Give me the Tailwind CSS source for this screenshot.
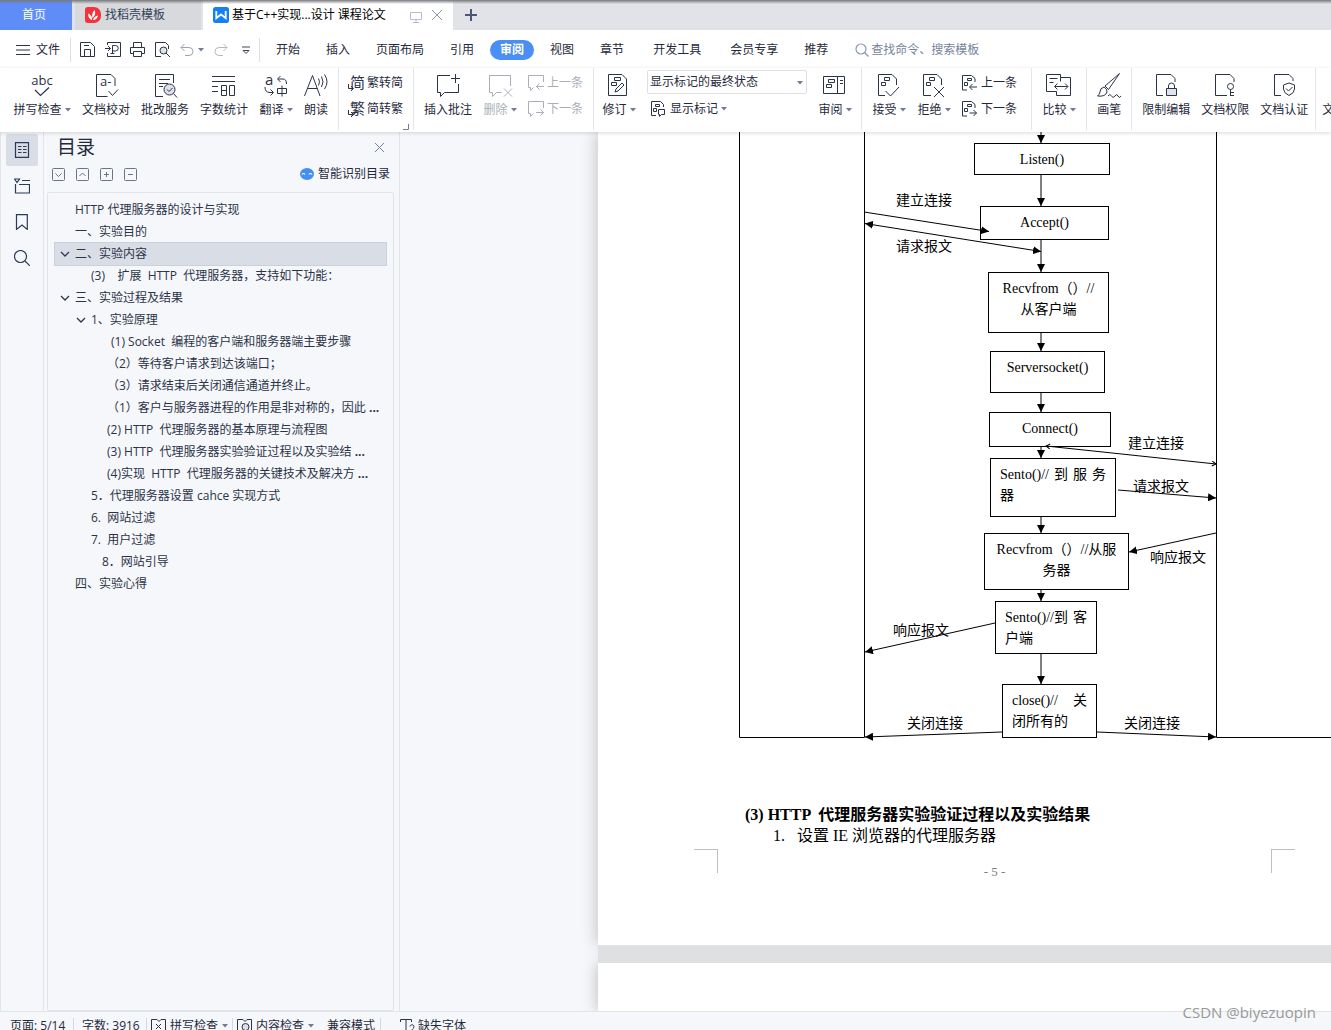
<!DOCTYPE html>
<html lang="zh-CN">
<head>
<meta charset="utf-8">
<title>基于C++实现 课程论文</title>
<script src="https://cdn.jsdelivr.net/npm/@tailwindcss/browser@4"></script>
</head>
<body class="flex h-screen flex-col overflow-hidden bg-[#f5f7fa] font-['Open_Sans','Noto_Sans_CJK_SC',sans-serif] text-xs text-[#1f2a3c]">

<svg class="absolute size-0" aria-hidden="true">
  <defs>
    <symbol id="caret" viewBox="0 0 6 4"><path d="M0 0h6L3 3.6z" fill="#6f7c94"/></symbol>
    <symbol id="chev" viewBox="0 0 10 6"><path d="M1 1l4 4 4-4" fill="none" stroke="#2b3650" stroke-width="1.3"/></symbol>
    <marker id="arr" viewBox="0 0 8 8" refX="8" refY="4" markerWidth="8" markerHeight="8" markerUnits="userSpaceOnUse" orient="auto-start-reverse"><path d="M0 0l8 4-8 4z" fill="#000" stroke="none"/></marker>
    <marker id="arr-open" viewBox="0 0 6 6" refX="5" refY="3" markerWidth="6" markerHeight="6" markerUnits="userSpaceOnUse" orient="auto-start-reverse"><path d="M1 .5L5 3 1 5.500" fill="none" stroke="#000"/></marker>
  </defs>
</svg>

<!-- Window tabs -->
<header class="relative flex h-[30px] shrink-0 items-stretch bg-[#e1e3e8] text-[#333f57]">
  <button class="w-18 bg-[#5f8df8] pr-1 text-white">首页</button>
  <button class="ml-[3px] flex w-[126px] items-center gap-1 bg-[#d7d9dd] pl-[10px]">
    <svg class="size-4" viewBox="0 0 16 16"><path d="M3 0h6a7 7 0 0 1 7 7v2a7 7 0 0 1-7 7H3a3 3 0 0 1-3-3V3a3 3 0 0 1 3-3z" fill="#f5323c"/><path d="M7 13C4 12 3 9.500 3.200 6.500 5.500 7.500 6.500 9 7 11zM7.500 11C6.500 8 7.500 5 9.500 3c1.500 3 .5 6-2 8zM8 13c.5-2.500 2.500-4 5-4.500C12.500 11 11 13 8 13z" fill="#fff"/></svg>
    <span>找稻壳模板</span>
  </button>
  <div class="ml-[2px] flex w-[250px] items-center bg-white pl-[10px]">
    <svg class="size-4" viewBox="0 0 16 16"><rect width="16" height="16" rx="2.500" fill="#1380f5"/><path d="M3.300 4v7.200L8 7.500l4.700 3.700V4" fill="none" stroke="#fff" stroke-width="1.800"/></svg>
    <span class="ml-[3px] text-black">基于C++实现...设计 课程论文</span>
    <svg class="mt-1 ml-auto size-3" viewBox="0 0 12 12" fill="none" stroke="#b4bdd0"><path d="M.5 1.500h11v7H.5zM6 8.500v3M3 11.500h6"/></svg>
    <button aria-label="关闭标签" class="mr-[10px] ml-[9px]"><svg class="size-3" viewBox="0 0 12 12" stroke="#8c9ab5"><path d="M1 1l10 10M11 1L1 11"/></svg></button>
  </div>
  <button aria-label="新建标签" class="ml-3 pb-px"><svg class="size-3" viewBox="0 0 12 12" stroke="#4a5876" stroke-width="2"><path d="M6 0v12M0 6h12"/></svg></button>
  <div class="pointer-events-none absolute inset-x-0 top-0 h-1 bg-gradient-to-b from-[#77797d] to-transparent"></div>
</header>

<!-- Menu row -->
<nav class="flex h-[38px] shrink-0 items-center bg-white pt-px">
  <button class="flex items-center gap-[6px] pr-[10px] pl-4">
    <svg class="h-3 w-[14px]" viewBox="0 0 14 12" stroke="#2b3347"><path d="M0 1.500h14M0 6h14M0 10.500h14"/></svg>文件
  </button>
  <div class="flex h-6 items-center border-l border-[#dcdfe5] pl-[9px]">
    <button aria-label="保存"><svg class="size-4" viewBox="0 0 16 16" fill="none" stroke="#2b3347"><path d="M.5 14.500V.5h10l4 4v10zM4.500 14V7.500h6V14M4 3.500h5"/></svg></button>
    <button aria-label="输出为PDF" class="ml-[9px]"><svg class="size-4" viewBox="0 0 16 16" fill="none" stroke="#2b3347"><path d="M2.500 3V.5h13v14h-13V11M0 6.500h5M3 4l2.500 2.500L3 9M7.500 12V3.500h3a2.500 2.500 0 0 1 0 5.500h-3M5.500 11.500h4"/></svg></button>
    <button aria-label="打印" class="ml-[9px]"><svg class="size-4" viewBox="0 0 16 16" fill="none" stroke="#2b3347"><path d="M3.500 5V.5h8V5M3.500 11.500h-3V5.500h14v6h-3M3.500 9.500h8v5h-8z"/></svg></button>
    <button aria-label="打印预览" class="ml-[9px]"><svg class="size-4" viewBox="0 0 16 16" fill="none" stroke="#2b3347"><path d="M6 14.500H.5V.5h10l3 3V7M11 11l4 4"/><circle cx="8.500" cy="8.500" r="3.500" fill="#dfe3ea"/></svg></button>
    <button aria-label="撤销" class="ml-[9px] flex items-center gap-1"><svg class="h-4 w-[14px]" viewBox="0 0 14 16" fill="none" stroke="#9aa3b2"><path d="M4.500 2L1 5.500 4.500 9M1 5.500h8a4 4 0 0 1 0 8H5"/></svg><svg class="h-1 w-[6px]"><use href="#caret"/></svg></button>
    <button aria-label="恢复" class="ml-[10px]"><svg class="h-4 w-[14px]" viewBox="0 0 14 16" fill="none" stroke="#b3b9c4"><path d="M9.500 2L13 5.500 9.500 9M13 5.500H5a4 4 0 0 0 0 8h4"/></svg></button>
    <button aria-label="自定义快速访问" class="ml-[14px] pr-[9px]"><svg class="size-2" viewBox="0 0 8 8" fill="none" stroke="#3d475c"><path d="M0 1h8M1 4.500h6L4 7.500z"/></svg></button>
  </div>
  <div class="flex h-6 items-center border-l border-[#dcdfe5] pl-[3px] whitespace-nowrap">
    <button class="px-[13px]">开始</button>
    <button class="px-[13px]">插入</button>
    <button class="px-[13px]">页面布局</button>
    <button class="px-[13px]">引用</button>
    <button class="mx-[3px] h-5 rounded-full bg-[#4a8ff5] px-[10px] leading-5 font-bold text-white">审阅</button>
    <button class="px-[13px]">视图</button>
    <button class="px-[13px]">章节</button>
    <button class="px-4">开发工具</button>
    <button class="px-[13px]">会员专享</button>
    <button class="px-[13px]">推荐</button>
  </div>
  <label class="ml-[14px] flex items-center gap-[2px]">
    <svg class="size-[14px]" viewBox="0 0 14 14" fill="none" stroke="#8a99b3" stroke-width="1.200"><circle cx="6" cy="6" r="5"/><path d="M9.500 9.500l4 4"/></svg>
    <input aria-label="查找命令" placeholder="查找命令、搜索模板" class="w-40 outline-none placeholder:text-[#76849d]">
  </label>
</nav>

<!-- Review ribbon -->
<section class="z-10 flex h-16 shrink-0 overflow-hidden bg-white pb-[2px] leading-4 whitespace-nowrap shadow-[0_1px_4px_rgba(0,0,0,0.15)]">
  <div class="flex shrink-0 gap-[11px] pt-[6px] pr-[10px] pl-[13px]">
    <button class="flex w-[58px] flex-col items-center gap-1">
      <svg class="size-6 overflow-visible" viewBox="0 0 24 24"><text x="12" y="11" text-anchor="middle" font-size="13" fill="#2b3347">abc</text><path d="M5 16l5.500 5.500L19 13.500" fill="none" stroke="#2b3347" stroke-width="1.200"/></svg>
      <span class="flex items-center gap-[3px]">拼写检查<svg class="h-1 w-[6px]"><use href="#caret"/></svg></span>
    </button>
    <button class="flex flex-col items-center gap-1">
      <svg class="size-6 overflow-visible" viewBox="0 0 24 24" fill="none" stroke="#2b3347"><path d="M13.500 22.500h-11V.5H17l4 4V12M14.500 17l4 4.500 5.500-6"/><text x="6" y="12" font-size="13" fill="#2b3347" stroke="none">a-</text></svg>文档校对
    </button>
    <button class="flex flex-col items-center gap-1">
      <svg class="size-6 overflow-visible" viewBox="0 0 24 24" fill="none" stroke="#2b3347"><path d="M10 22.500H2.500V.5h18V9M6 5.500h11M6 9.500h9M6 12.500h4"/><circle cx="16.500" cy="15.500" r="5.500" fill="#dde1e8"/><path d="M14 15.500l2 2 3.500-3.500M20.500 19.500l3.500 4"/></svg>批改服务
    </button>
    <button class="flex flex-col items-center gap-1">
      <svg class="size-6 overflow-visible" viewBox="0 0 24 24" fill="none" stroke="#2b3347"><path d="M0 2.500h23M0 7.500h23M0 12.500h6M0 17.500h6M9.500 11.500h5v10h-5zM9.500 16.500h5M17.500 11.500h5v10h-5z"/></svg>字数统计
    </button>
    <button class="flex w-[34px] flex-col items-center gap-1">
      <svg class="size-6 overflow-visible" viewBox="0 0 24 24" fill="none" stroke="#2b3347"><text x="1" y="11" font-size="15" fill="#2b3347" stroke="none">a</text><path d="M16.500 2L13.500 5l3 3M14 5h5q3.500 0 3.500 5M1 13q0 5.500 5 5.500h3M6.500 15.500l3 3-3 3M13.500 14.500h9v5h-9zM18 11.500v11"/></svg>
      <span class="flex items-center gap-[3px]">翻译<svg class="h-1 w-[6px]"><use href="#caret"/></svg></span>
    </button>
    <button class="flex flex-col items-center gap-1">
      <svg class="size-6 overflow-visible" viewBox="0 0 24 24" fill="none" stroke="#2b3347"><path d="M.5 22L8.500 1.500 16 22M3.500 14.500h10M14.500 4.500q2 3 0 7M17.500 2.500q3 5.500 0 10.500M20.500 .5q5 7.500 0 14.500"/></svg>朗读
    </button>
  </div>

  <div class="relative flex shrink-0 flex-col gap-[10px] border-l border-[#e3e6eb] px-[10px] pt-[7px]">
    <button class="flex items-center gap-[2px]">
      <svg class="size-4 overflow-visible" viewBox="0 0 16 16" fill="none" stroke="#2b3347"><text x="1" y="13" font-size="15" fill="#2b3347" stroke="none">简</text><path d="M-.5 9v4.500H4M2 11l2.500 2.500L2 16"/></svg>繁转简
    </button>
    <button class="flex items-center gap-[2px]">
      <svg class="size-4 overflow-visible" viewBox="0 0 16 16" fill="none" stroke="#2b3347"><text x="1" y="13" font-size="15" fill="#2b3347" stroke="none">繁</text><path d="M-.5 9v4.500H4M2 11l2.500 2.500L2 16"/></svg>简转繁
    </button>
    <svg class="absolute right-1 bottom-0 size-[6px]" viewBox="0 0 6 6"><path d="M5.500 0v5.500H0" fill="none" stroke="#6f7c94"/></svg>
  </div>

  <div class="flex shrink-0 gap-[11px] border-l border-[#e3e6eb] px-[10px] pt-[6px]">
    <button class="flex flex-col items-center gap-1">
      <svg class="size-6 overflow-visible" viewBox="0 0 24 24" fill="none" stroke="#2b3347"><path d="M14 1.500H1.500v17h3v4l4-4h14V10M19.500 0v9M15 4.500h9"/></svg>插入批注
    </button>
    <button disabled class="flex w-[34px] flex-col items-center gap-1 text-[#a9aeb8]">
      <svg class="size-6 overflow-visible" viewBox="0 0 24 24" fill="none" stroke="#a9aeb8"><path d="M22.500 12V1.500H1.500v17h3v4l4-4h5M16 14.500l8 8M24 14.500l-8 8"/></svg>
      <span class="flex items-center gap-[3px]">删除<svg class="h-1 w-[6px]"><use href="#caret"/></svg></span>
    </button>
    <div class="flex flex-col gap-[10px] pt-px text-[#a9aeb8]">
      <button disabled class="flex items-center gap-[2px]"><svg class="size-4 overflow-visible" viewBox="0 0 16 16" fill="none" stroke="#a9aeb8"><path d="M15.500 7V.5H.5v12h2v3l3-3M16 11.500H8.500M11.500 8.500l-3 3 3 3"/></svg><span class="pl-px">上一条</span></button>
      <button disabled class="flex items-center gap-[2px]"><svg class="size-4 overflow-visible" viewBox="0 0 16 16" fill="none" stroke="#a9aeb8"><path d="M15.500 7V.5H.5v12h2v3l3-3M8 11.500h7.500M12.500 8.500l3 3-3 3"/></svg><span class="pl-px">下一条</span></button>
    </div>
  </div>

  <div class="flex shrink-0 gap-[11px] border-l border-[#e3e6eb] pt-[6px] pr-[9px] pl-2">
    <button class="flex w-[34px] flex-col items-center gap-1">
      <svg class="size-6 overflow-visible" viewBox="0 0 24 24" fill="none" stroke="#2b3347"><path d="M1.500 .5H15l4.500 4.500v16.500h-18zM7.500 3.500h6v3h-6zM4.500 8.500h5v3h-5zM8 18l1-3 6-6 2 2-6 6z"/></svg>
      <span class="flex items-center gap-[3px]">修订<svg class="h-1 w-[6px]"><use href="#caret"/></svg></span>
    </button>
    <div class="-mt-1 flex flex-col items-start gap-[7px]">
      <div class="relative">
        <select aria-label="标记显示状态" class="h-6 w-40 appearance-none rounded-xs border border-[#dcdfe5] bg-white pl-[2px]"><option>显示标记的最终状态</option></select>
        <svg class="pointer-events-none absolute top-[11px] right-1 h-1 w-[6px]"><use href="#caret"/></svg>
      </div>
      <button class="flex items-center gap-[3px] pl-1">
        <svg class="size-4 overflow-visible" viewBox="0 0 16 16" fill="none" stroke="#2b3347"><path d="M5 14.500H.5V.5h9l3 3V6M4.500 3.500h4v2h-4zM2.500 7.500h3v3h-3zM7.500 8.500h6v5h-3l-2 2v-2h-1z"/></svg>显示标记<svg class="h-1 w-[6px]"><use href="#caret"/></svg>
      </button>
    </div>
    <button class="flex w-[34px] flex-col items-center gap-1">
      <svg class="size-6 overflow-visible" viewBox="0 0 24 24" fill="none" stroke="#2b3347"><path d="M.5 2.500h21v17H.5zM14.500 2.500v17M5.500 5.500h6v3h-6zM3.500 10.500h5v3h-5zM17 6.500h3M17 9.500h3"/></svg>
      <span class="flex items-center gap-[3px]">审阅<svg class="h-1 w-[6px]"><use href="#caret"/></svg></span>
    </button>
  </div>

  <div class="flex shrink-0 gap-[11px] border-l border-[#e3e6eb] pt-[6px] pr-[14px] pl-[10px]">
    <button class="flex w-[34px] flex-col items-center gap-1">
      <svg class="size-6 overflow-visible" viewBox="0 0 24 24" fill="none" stroke="#2b3347"><path d="M8 21.500H1.500V.5H15l4.500 4.500v6M7.500 3.500h5v3h-5zM4.500 8.500h4v3h-4zM8.500 17l5 5 8.500-9"/></svg>
      <span class="flex items-center gap-[3px]">接受<svg class="h-1 w-[6px]"><use href="#caret"/></svg></span>
    </button>
    <button class="flex w-[34px] flex-col items-center gap-1">
      <svg class="size-6 overflow-visible" viewBox="0 0 24 24" fill="none" stroke="#2b3347"><path d="M9 21.500H1.500V.5H15l4.500 4.500v6M7.500 3.500h5v3h-5zM4.500 8.500h4v3h-4zM12 13l10 10M22 13L12 23"/></svg>
      <span class="flex items-center gap-[3px]">拒绝<svg class="h-1 w-[6px]"><use href="#caret"/></svg></span>
    </button>
    <div class="flex flex-col gap-[10px] pt-px">
      <button class="flex items-center gap-[2px]"><svg class="size-4 overflow-visible" viewBox="0 0 16 16" fill="none" stroke="#2b3347"><path d="M5 15H.5V.5h9l3.500 3V7M5.500 3.500h4v2h-4zM2.500 7.500h3v3h-3zM15 12H8M10.500 9l-3 3 3 3"/></svg><span class="pl-px">上一条</span></button>
      <button class="flex items-center gap-[2px]"><svg class="size-4 overflow-visible" viewBox="0 0 16 16" fill="none" stroke="#2b3347"><path d="M5 15H.5V.5h9l3.500 3V7M5.500 3.500h4v2h-4zM2.500 7.500h3v3h-3zM7.500 12h7M11.500 9l3 3-3 3"/></svg><span class="pl-px">下一条</span></button>
    </div>
  </div>

  <div class="flex shrink-0 border-l border-[#e3e6eb] px-[10px] pt-[6px]">
    <button class="flex w-[34px] flex-col items-center gap-1">
      <svg class="size-6 overflow-visible" viewBox="0 0 24 24" fill="none" stroke="#2b3347"><path d="M9.500 17.500H-.5V.5h14v3M2.500 4.500h8M2.500 8.500h4M13.500 3.500h10v18h-14v-4M13.500 3.500v4M8 12.500h12.500M10.500 9.500l-3 3 3 3M18 9.500l3 3-3 3"/></svg>
      <span class="flex items-center gap-[3px]">比较<svg class="h-1 w-[6px]"><use href="#caret"/></svg></span>
    </button>
  </div>

  <div class="flex shrink-0 border-l border-[#e3e6eb] px-[10px] pt-[6px]">
    <button class="flex flex-col items-center gap-1">
      <svg class="size-6 overflow-visible" viewBox="0 0 24 24" fill="none" stroke="#2b3347"><path d="M22.500-.5L8 12l3.500 3.500zM7 13q-4 1-4 5-1 3-2.500 4 8 1 9.500-4 .5-3-3-5zM11 22q2-3 3.500 0t3.500 0 3 0 3 0"/></svg>画笔
    </button>
  </div>

  <div class="flex shrink-0 gap-[11px] border-l border-[#e3e6eb] pt-[6px] pr-[7px] pl-[10px]">
    <button class="flex flex-col items-center gap-1">
      <svg class="size-6 overflow-visible" viewBox="0 0 24 24" fill="none" stroke="#2b3347"><path d="M9 21.500H2.500V.5H17l4 4V8M14.500 14v-2a3 3 0 0 1 6 0v2"/><path d="M12.500 14.500h10v7h-10z" fill="#dfe3ea"/></svg>限制编辑
    </button>
    <button class="flex flex-col items-center gap-1">
      <svg class="size-6 overflow-visible" viewBox="0 0 24 24" fill="none" stroke="#2b3347"><path d="M14 21.500H2.500V.5H17l4 4V8M17.500 15.500V22M17.500 18.500h3.500M17.500 21.500h3.500"/><circle cx="17.500" cy="12.500" r="3"/></svg>文档权限
    </button>
    <button class="flex flex-col items-center gap-1">
      <svg class="size-6 overflow-visible" viewBox="0 0 24 24" fill="none" stroke="#2b3347"><path d="M9 21.500H2.500V.5H17l4 4V7M17 9l5.500 2v4q0 4-5.500 6.500-5.500-2.500-5.500-6.500v-4zM14 14.500l2.500 2.500 4-4"/></svg>文档认证
    </button>
  </div>
  <div class="flex shrink-0 border-l border-[#e3e6eb] pt-[34px] pl-[6px]"><button class="h-4">文</button></div>
</section>

<!-- Workspace -->
<main class="flex min-h-0 flex-1 border-b border-[#e2e4e9]">
  <aside class="flex w-11 shrink-0 flex-col items-center gap-1 border-x border-[#e2e4e9] pt-[2px]">
    <button aria-label="目录" class="flex size-8 items-center justify-center rounded-xs bg-[#d9dde6]"><svg class="size-4" viewBox="0 0 16 16" fill="none" stroke="#2b3a5a" stroke-width="1.200"><path d="M1.500 .6h13v14.800h-13zM4 4.500h3.500M4 7.500h3.500M4 10.500h3.500M9 4.500h3.500M9 7.500h3.500M9 10.500h3.500"/></svg></button>
    <button aria-label="章节" class="flex size-8 items-center justify-center"><svg class="size-4" viewBox="0 0 16 16" fill="none" stroke="#2b3a5a" stroke-width="1.200"><path d="M.5 1h5L3 4.500zM8 2.500h8M1.500 6v9h14V6.500H5"/></svg></button>
    <button aria-label="书签" class="flex size-8 items-center justify-center"><svg class="size-4" viewBox="0 0 16 16" fill="none" stroke="#2b3a5a" stroke-width="1.200"><path d="M2.500 .6h10.800v14.800L8 11l-5.500 4.400z"/></svg></button>
    <button aria-label="查找" class="flex size-8 items-center justify-center"><svg class="size-4" viewBox="0 0 16 16" fill="none" stroke="#2b3a5a" stroke-width="1.200"><circle cx="6.500" cy="6.500" r="6"/><path d="M11 11l5 5"/></svg></button>
  </aside>

  <section class="flex w-[356px] shrink-0 flex-col border-r border-[#e2e4e9] pr-[5px] pl-[3px]">
    <div class="flex h-[30px] shrink-0 items-center justify-between pr-[9px] pl-[10px]">
      <h2 class="text-[19px] leading-6">目录</h2>
      <button aria-label="关闭"><svg class="size-[11px]" viewBox="0 0 11 11" stroke="#77829a"><path d="M1 1l9 9M10 1L1 10"/></svg></button>
    </div>
    <div class="flex h-[30px] shrink-0 items-center gap-[11px] pb-[6px] pl-[5px]">
      <button aria-label="展开"><svg class="size-[13px]" viewBox="0 0 13 13" fill="none" stroke="#6b7488"><rect x=".5" y=".5" width="12" height="12" rx="1"/><path d="M3.500 5.500l3 3 3-3"/></svg></button>
      <button aria-label="收起"><svg class="size-[13px]" viewBox="0 0 13 13" fill="none" stroke="#6b7488"><rect x=".5" y=".5" width="12" height="12" rx="1"/><path d="M3.500 8l3-3 3 3"/></svg></button>
      <button aria-label="增加级别"><svg class="size-[13px]" viewBox="0 0 13 13" fill="none" stroke="#6b7488"><rect x=".5" y=".5" width="12" height="12" rx="1"/><path d="M4 6.500h5M6.500 4v5"/></svg></button>
      <button aria-label="减少级别"><svg class="size-[13px]" viewBox="0 0 13 13" fill="none" stroke="#6b7488"><rect x=".5" y=".5" width="12" height="12" rx="1"/><path d="M4 6.500h5"/></svg></button>
      <button class="ml-auto flex items-center gap-1 pr-1">
        <svg class="h-3 w-[14px]" viewBox="0 0 14 12"><ellipse cx="7" cy="6" rx="7" ry="6" fill="#4490f0"/><path d="M2 6.500q1.500-2 3 0M9 6.500q1.500-2 3 0" fill="none" stroke="#fff" stroke-width="1.200"/></svg>智能识别目录
      </button>
    </div>
    <ul class="min-h-0 flex-1 rounded-xs border border-[#e2e4e9] px-[7px] pt-[6px] leading-[22px] text-[#2b3347] *:whitespace-pre">
      <li class="pl-5">HTTP 代理服务器的设计与实现</li>
      <li class="pl-5">一、实验目的</li>
      <li class="flex items-center gap-[5px] bg-[#d9dde6] pl-[5px] outline outline-[#c9d1df]"><svg class="h-[6px] w-[10px]"><use href="#chev"/></svg>二、实验内容</li>
      <li class="pl-9">(3)    扩展  HTTP  代理服务器，支持如下功能：</li>
      <li class="flex items-center gap-[5px] pl-[5px]"><svg class="h-[6px] w-[10px]"><use href="#chev"/></svg>三、实验过程及结果</li>
      <li class="flex items-center gap-[5px] pl-[21px]"><svg class="h-[6px] w-[10px]"><use href="#chev"/></svg>1、实验原理</li>
      <li class="pl-14">(1) Socket  编程的客户端和服务器端主要步骤</li>
      <li class="pl-[52px]">（2）等待客户请求到达该端口；</li>
      <li class="pl-[52px]">（3）请求结束后关闭通信通道并终止。</li>
      <li class="pl-[52px]">（1）客户与服务器进程的作用是非对称的，因此<b> ...</b></li>
      <li class="pl-[52px]">(2) HTTP  代理服务器的基本原理与流程图</li>
      <li class="pl-[52px]">(3) HTTP  代理服务器实验验证过程以及实验结<b> ...</b></li>
      <li class="pl-[52px]">(4)实现  HTTP  代理服务器的关键技术及解决方<b> ...</b></li>
      <li class="pl-9">5．代理服务器设置 cahce 实现方式</li>
      <li class="pl-9">6.  网站过滤</li>
      <li class="pl-9">7.  用户过滤</li>
      <li class="pl-[47px]">8．网站引导</li>
      <li class="pl-5">四、实验心得</li>
    </ul>
  </section>

  <!-- Document canvas -->
  <div class="flex min-w-0 flex-1 flex-col items-start overflow-hidden bg-[#f5f7fa] pl-[198px] font-['Liberation_Serif','Noto_Sans_CJK_SC',serif] text-sm leading-[21px] text-black">
    <article class="h-[813px] w-[793px] shrink-0 bg-white shadow-[0_0_16px_rgba(0,0,0,0.25)]">
      <div class="relative h-[672px]">
        <svg class="absolute inset-0 h-full w-full" fill="none" stroke="#000">
          <path d="M141.500 0v605.500H266.500V0M618.500 0v605.500H794"/>
          <g marker-end="url(#arr)">
            <path d="M443 0V11"/><path d="M443 43V74"/><path d="M443 108V140"/><path d="M443 201V219"/><path d="M443 261V280"/><path d="M443 315V326"/><path d="M443 385V401"/><path d="M443 458V469"/><path d="M443 522V552"/>
            <path d="M520 358L618 366"/><path d="M618 401L531 420"/><path d="M397 491L267 520"/><path d="M404 600L267 605"/><path d="M499 600L618 605"/>
          </g>
          <path d="M267 91.500L443 119.500" marker-start="url(#arr)" marker-end="url(#arr)"/>
          <path d="M448 314L618 332" marker-start="url(#arr-open)" marker-end="url(#arr-open)"/>
        </svg>
        <div class="absolute top-[11px] left-[376px] h-8 w-[136px] border border-black pt-[5px] text-center">Listen()</div>
        <div class="absolute top-[74px] left-[382px] h-[34px] w-[129px] border border-black bg-white pt-[5px] text-center">Accept()</div>
        <div class="absolute top-[140px] left-[390px] h-[61px] w-[121px] border border-black pt-[5px] text-center">Recvfrom（）//<br>从客户端</div>
        <div class="absolute top-[219px] left-[392px] h-[42px] w-[115px] border border-black pt-[5px] text-center">Serversocket()</div>
        <div class="absolute top-[280px] left-[391px] h-[35px] w-[122px] border border-black pt-[5px] text-center">Connect()</div>
        <div class="absolute top-[326px] left-[392px] h-[59px] w-[126px] border border-black px-[9px] pt-[5px]"><div class="flex justify-between"><span>Sento()//</span><span>到</span><span>服</span><span>务</span></div>器</div>
        <div class="absolute top-[401px] left-[386px] h-[57px] w-[145px] border border-black pt-[5px] text-center">Recvfrom（）//从服<br>务器</div>
        <div class="absolute top-[469px] left-[397px] h-[53px] w-[102px] border border-black px-[9px] pt-[5px]"><div class="flex justify-between"><span>Sento()//到</span><span>客</span></div>户端</div>
        <div class="absolute top-[552px] left-[404px] h-[54px] w-[95px] border border-black px-[9px] pt-[5px]"><div class="flex justify-between"><span>close()//</span><span>关</span></div>闭所有的</div>
        <svg class="absolute inset-0 h-full w-full" fill="none" stroke="#000">
          <path d="M266 80L391 99.500" marker-end="url(#arr)"/>
        </svg>
        <span class="absolute top-[58px] left-[298px]">建立连接</span>
        <span class="absolute top-[104px] left-[298px]">请求报文</span>
        <span class="absolute top-[301px] left-[530px]">建立连接</span>
        <span class="absolute top-[344px] left-[535px]">请求报文</span>
        <span class="absolute top-[415px] left-[552px]">响应报文</span>
        <span class="absolute top-[488px] left-[295px]">响应报文</span>
        <span class="absolute top-[581px] left-[309px]">关闭连接</span>
        <span class="absolute top-[581px] left-[526px]">关闭连接</span>
      </div>
      <h3 class="pl-[147px] text-base leading-[21px] font-bold whitespace-pre">(3) HTTP  代理服务器实验验证过程以及实验结果</h3>
      <p class="pl-[175px] text-base leading-[21px] whitespace-pre">1.   设置 IE 浏览器的代理服务器</p>
      <footer class="mx-24 mt-[3px] flex items-start justify-between text-[13px] text-[#7d7d7d]">
        <span class="size-6 border-t border-r border-[#bfbfbf]"></span>
        <span class="pt-3">- 5 -</span>
        <span class="size-6 border-t border-l border-[#bfbfbf]"></span>
      </footer>
    </article>
    <div class="z-10 h-[18px] w-[793px] shrink-0 bg-[#dfe0e2]"></div>
    <article class="min-h-0 w-[793px] flex-1 bg-white shadow-[0_0_16px_rgba(0,0,0,0.25)]"></article>
  </div>
</main>

<!-- Status bar -->
<footer class="relative flex h-[18px] shrink-0 items-start overflow-hidden pt-[6px] pl-[10px] leading-4 whitespace-nowrap">
  <span class="w-[63px]">页面: 5/14</span>
  <span class="w-[73px] border-l border-[#d5d8de] pl-2">字数: 3916</span>
  <button class="flex w-[86px] items-center gap-[3px] border-l border-[#d5d8de] pl-1">
    <svg class="size-4 shrink-0" viewBox="0 0 16 16" fill="none" stroke="#2b3347"><path d="M6 1.500H.5v13h14v-13H10M6 1.500l2 2 2-2M5 6l5 5M10 6l-5 5"/></svg>拼写检查<svg class="ml-px h-1 w-[6px]"><use href="#caret"/></svg>
  </button>
  <button class="flex w-[95px] items-center gap-[3px] border-l border-[#d5d8de] pl-1">
    <svg class="size-4 shrink-0" viewBox="0 0 16 16" fill="none" stroke="#2b3347"><path d="M4 14.500H.5v-13H6l2 2 2-2h4.500v13H12"/><circle cx="8.500" cy="9" r="3.500" fill="#dde1e8"/></svg>内容检查<svg class="ml-px h-1 w-[6px]"><use href="#caret"/></svg>
  </button>
  <button class="w-[53px] text-left">兼容模式</button>
  <button class="flex items-center gap-[2px] border-l border-[#d5d8de] pl-[19px]">
    <svg class="size-4" viewBox="0 0 16 16" fill="none" stroke="#2b3347"><path d="M.5 4V1.500h11V4M6 1.500v13M4 14.500h4M10 8.500a2 2 0 1 1 3 2q-1 .8-1 2M12 14v1.500"/></svg>缺失字体
  </button>
</footer>
<div class="pointer-events-none absolute right-[15px] bottom-2 text-[15px] leading-5 text-[#999]">CSDN @biyezuopin</div>
</body>
</html>
